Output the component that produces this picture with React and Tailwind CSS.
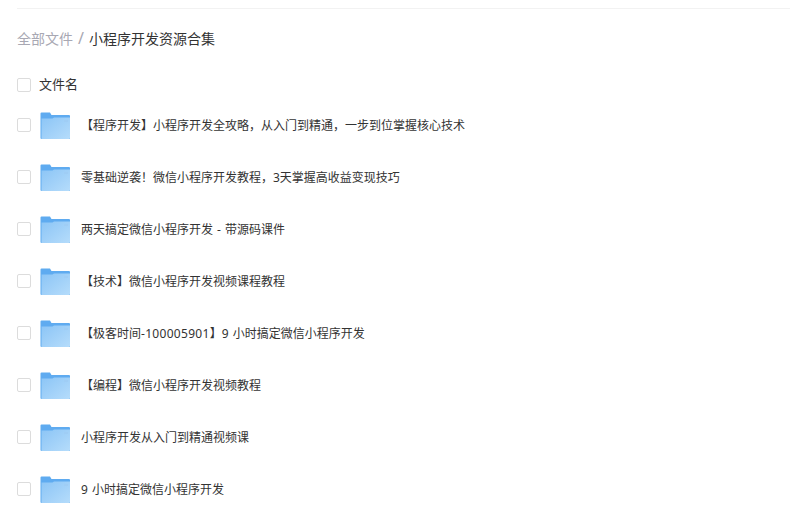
const files = [
  '【程序开发】小程序开发全攻略，从入门到精通，一步到位掌握核心技术',
  '零基础逆袭！微信小程序开发教程，3天掌握高收益变现技巧',
  '两天搞定微信小程序开发 - 带源码课件',
  '【技术】微信小程序开发视频课程教程',
  <>【极客时间<span className="tracking-[0.3px]">-100005901</span>】9 小时搞定微信小程序开发</>,
  '【编程】微信小程序开发视频教程',
  '小程序开发从入门到精通视频课',
  '9 小时搞定微信小程序开发',
]

function FolderIcon() {
  return (
    <svg width="30" height="28" viewBox="0 0 30 28" className="block shrink-0">
      <defs>
        <linearGradient id="front" x1="0" y1="0" x2="1" y2="1">
          <stop offset="0" stopColor="#8cc5f6" />
          <stop offset="1" stopColor="#b5dcfb" />
        </linearGradient>
      </defs>
      <path d="M0.500 1.500a1 1 0 0 1 1-1h8.500l1.500 2.500H29a1 1 0 0 1 1 1V27H1.500a1 1 0 0 1-1-1z" fill="#5fabf0" />
      <path d="M1.500 27V6.500h11l1.500-1H30V26a1 1 0 0 1-1 1z" fill="url(#front)" />
      <rect x="24" y="8" width="4" height="2" fill="#9fcdf5" />
    </svg>
  )
}

function Checkbox({ className = '' }) {
  return <span className={`block w-[14px] h-[14px] shrink-0 rounded-[2px] border border-[#dcdcdc] bg-white ${className}`} />
}

export default function App() {
  return (
    <div className="w-[790px] h-[517px] overflow-hidden bg-white text-[#333] font-['Noto_Sans','Noto_Sans_CJK_SC',sans-serif]">
      <div className="ml-[17px] h-[9px] border-b border-[#f2f2f2]" />
      <div className="ml-[17px] mt-[19px] flex items-center h-5 text-[14px]">
        <span className="text-[#a8a8b3]">全部文件</span>
        <span className="mx-[5px] text-[16px] text-[#a8a8b3]">/</span>
        <span className="text-[#333]">小程序开发资源合集</span>
      </div>
      <div className="ml-[17px] mt-[27px] flex items-center h-5 text-[13px]">
        <Checkbox />
        <span className="ml-[8px]">文件名</span>
      </div>
      <ul className="mt-[5px]">
        {files.map((name, i) => (
          <li key={i} className="flex items-center h-[52px] pl-[17px] text-[12px] [word-spacing:1px]">
            <Checkbox className="-mt-[2px]" />
            <span className="ml-[9px]"><FolderIcon /></span>
            <span className="ml-[11px] whitespace-nowrap">{name}</span>
          </li>
        ))}
      </ul>
    </div>
  )
}
